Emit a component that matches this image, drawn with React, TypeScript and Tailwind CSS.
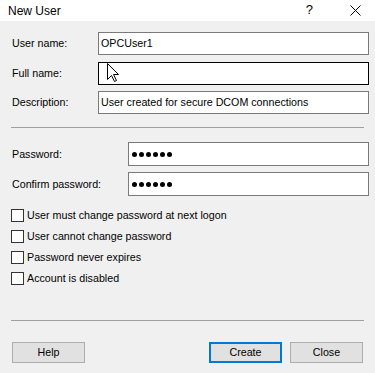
import React from "react";

const font = { fontFamily: '"Liberation Sans", Arial, sans-serif' };

function TextBox({ value, focused, width, height, children }: { value?: string; focused?: boolean; width: string; height: string; children?: React.ReactNode }) {
  return (
    <div
      className={`relative shrink-0 ${width} ${height} bg-white border ${focused ? "border-black" : "border-[#7a7a7a]"} flex items-center pl-[2px] text-[10.7px] text-black`}
    >
      {value}
      {children}
    </div>
  );
}

function Dots() {
  return (
    <div className="flex gap-[2px] pl-[1px]">
      {[0, 1, 2, 3, 4, 5].map((i) => (
        <div key={i} className="w-[5px] h-[5px] rounded-full bg-black" />
      ))}
    </div>
  );
}

function Check({ label }: { label: string }) {
  return (
    <div className="flex items-center h-[21px] pl-[11px]">
      <div className="w-[13px] h-[13px] border border-[#333333] bg-white" />
      <span className="ml-[3px] text-[10.7px] text-black">{label}</span>
    </div>
  );
}

function Btn({ label, primary }: { label: string; primary?: boolean }) {
  return (
    <div
      className={`w-[73px] h-[21px] bg-[#e1e1e1] flex items-center justify-center text-[10.7px] text-black ${primary ? "border-2 border-[#0078d7]" : "border border-[#adadad]"}`}
    >
      {label}
    </div>
  );
}

export default function App() {
  return (
    <div className="w-[375px] h-[373px] flex flex-col bg-[#f0f0f0] overflow-hidden" style={font}>
      <div className="h-[21px] bg-white flex items-center shrink-0">
        <span className="ml-[8px] text-[12px] text-black">New User</span>
        <div className="flex-1" />
        <span className="text-[13px] text-black mr-[37px] -mt-[2px]">?</span>
        <svg width="11" height="11" viewBox="0 0 11 11" className="mr-[14px]">
          <path d="M0.5 0.5 L10.5 10.5 M10.5 0.5 L0.5 10.5" stroke="#000" strokeWidth="1" />
        </svg>
      </div>
      <div className="flex flex-col flex-1">
        <div className="flex items-center mt-[11px]">
          <span className="w-[98px] shrink-0 pl-[12px] text-[10.7px] text-black">User name:</span>
          <TextBox value="OPCUser1" width="w-[271px]" height="h-[23px]" />
        </div>
        <div className="flex items-center mt-[7px]">
          <span className="w-[98px] shrink-0 pl-[12px] text-[10.7px] text-black">Full name:</span>
          <TextBox focused width="w-[271px]" height="h-[23px]">
            <svg width="13" height="20" viewBox="0 0 13 20" className="absolute left-[8px] top-[0px]">
              <path d="M0.5 0.5 L0.5 16.5 L4.5 12.5 L7.5 18.5 L9.5 17.5 L6.5 11.5 L11.5 11.5 Z" fill="#fff" stroke="#000" strokeWidth="1" strokeLinejoin="miter" />
            </svg>
          </TextBox>
        </div>
        <div className="flex items-center mt-[6px]">
          <span className="w-[98px] shrink-0 pl-[12px] text-[10.7px] text-black">Description:</span>
          <TextBox value="User created for secure DCOM connections" width="w-[271px]" height="h-[23px]" />
        </div>
        <div className="mt-[13px] mx-[11px] h-px bg-[#a0a0a0]" />
        <div className="flex items-center mt-[14px]">
          <span className="w-[128px] shrink-0 pl-[12px] text-[10.7px] text-black">Password:</span>
          <TextBox width="w-[241px]" height="h-[24px]">
            <Dots />
          </TextBox>
        </div>
        <div className="flex items-center mt-[6px]">
          <span className="w-[128px] shrink-0 pl-[12px] text-[10.7px] text-black">Confirm password:</span>
          <TextBox width="w-[241px]" height="h-[24px]">
            <Dots />
          </TextBox>
        </div>
        <div className="flex flex-col mt-[9px]">
          <Check label="User must change password at next logon" />
          <Check label="User cannot change password" />
          <Check label="Password never expires" />
          <Check label="Account is disabled" />
        </div>
        <div className="mt-[31px] mx-[11px] h-px bg-[#a0a0a0]" />
        <div className="flex items-center mt-[21px] px-[12px]">
          <Btn label="Help" />
          <div className="flex-1" />
          <Btn label="Create" primary />
          <div className="w-[8px]" />
          <Btn label="Close" />
        </div>
      </div>
    </div>
  );
}
